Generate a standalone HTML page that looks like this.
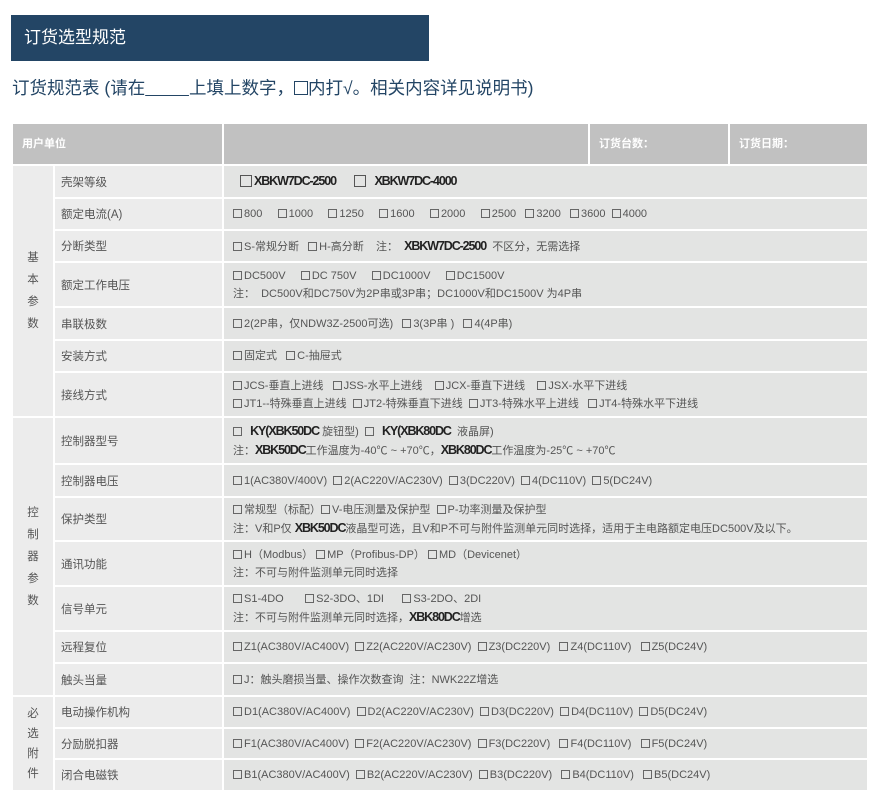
<!DOCTYPE html>
<html><head><meta charset="utf-8"><style>
*{margin:0;padding:0;box-sizing:border-box}
body{width:882px;height:805px;background:#fff;position:relative;overflow:hidden;font-family:"Liberation Sans","Noto Sans CJK SC",sans-serif;color:#555;font-size:11px}
.a{position:absolute}
.l{position:absolute;background:#ececec;left:55px;width:167px;padding-left:6px;display:flex;align-items:center;font-size:11.5px;color:#555}
.c{position:absolute;background:#e3e4e3;left:224px;width:643px;padding-left:9px;display:flex;flex-direction:column;justify-content:center;white-space:pre;line-height:18px}
.b{display:inline-block;width:9px;height:9px;border:1px solid #666;vertical-align:-1px;margin-right:2px}
.B{display:inline-block;width:12px;height:12px;border:1px solid #555;vertical-align:-2px;margin-right:2px}
.k{color:#222;font-weight:bold;letter-spacing:-1.1px;font-size:12.5px}
.v{position:absolute;left:13px;width:40px;text-align:center;line-height:22px;font-size:11.5px;color:#555;background:#ececec;display:flex;flex-direction:column;justify-content:center}
</style></head><body>
<div class="a" style="left:11px;top:15px;width:418px;height:46px;background:#234565;color:#fff;font-size:17px;line-height:46px;padding-left:13px">订货选型规范</div>
<div class="a" style="left:12px;top:75px;font-size:17.5px;color:#234565;white-space:pre">订货规范表 (请在<span style="text-decoration:underline">         </span>上填上数字，<span style="display:inline-block;width:14px;height:14px;border:1px solid #234565;vertical-align:-1px"></span>内打√。相关内容详见说明书)</div>

<div class="a" style="left:13px;top:124px;width:209px;height:40px;background:#c1c1c1;color:#fff;font-size:11px;line-height:40px;padding-left:9px;font-weight:bold">用户单位</div>
<div class="a" style="left:224px;top:124px;width:364px;height:40px;background:#c1c1c1"></div>
<div class="a" style="left:590px;top:124px;width:138px;height:40px;background:#c1c1c1;color:#fff;line-height:40px;padding-left:9px;font-weight:bold">订货台数：</div>
<div class="a" style="left:730px;top:124px;width:137px;height:40px;background:#c1c1c1;color:#fff;line-height:40px;padding-left:9px;font-weight:bold">订货日期：</div>

<div class="v" style="top:166px;height:250px">基<br>本<br>参<br>数</div>
<div class="v" style="top:418px;height:277px">控<br>制<br>器<br>参<br>数</div>
<div class="v" style="top:697px;height:93px;line-height:20px">必<br>选<br>附<br>件</div>

<div class="l" style="top:166px;height:31px">壳架等级</div>
<div class="c" style="top:166px;height:31px;padding-left:16px"><div><span class="B"></span><span class="k">XBKW7DC-2500</span>      <span class="B"></span>  <span class="k">XBKW7DC-4000</span></div></div>
<div class="l" style="top:199px;height:30px">额定电流(A)</div>
<div class="c" style="top:199px;height:30px"><div><span class="b"></span>800     <span class="b"></span>1000     <span class="b"></span>1250     <span class="b"></span>1600     <span class="b"></span>2000     <span class="b"></span>2500   <span class="b"></span>3200   <span class="b"></span>3600  <span class="b"></span>4000</div></div>
<div class="l" style="top:231px;height:30px">分断类型</div>
<div class="c" style="top:231px;height:30px"><div><span class="b"></span>S-常规分断   <span class="b"></span>H-高分断    注：  <span class="k">XBKW7DC-2500</span>  不区分，无需选择</div></div>
<div class="l" style="top:263px;height:43px">额定工作电压</div>
<div class="c" style="top:263px;height:43px"><div><span class="b"></span>DC500V     <span class="b"></span>DC 750V     <span class="b"></span>DC1000V     <span class="b"></span>DC1500V</div><div>注：  DC500V和DC750V为2P串或3P串；DC1000V和DC1500V 为4P串</div></div>
<div class="l" style="top:308px;height:31px">串联极数</div>
<div class="c" style="top:308px;height:31px"><div><span class="b"></span>2(2P串，仅NDW3Z-2500可选)   <span class="b"></span>3(3P串 )   <span class="b"></span>4(4P串)</div></div>
<div class="l" style="top:341px;height:30px">安装方式</div>
<div class="c" style="top:341px;height:30px"><div><span class="b"></span>固定式   <span class="b"></span>C-抽屉式</div></div>
<div class="l" style="top:373px;height:43px">接线方式</div>
<div class="c" style="top:373px;height:43px"><div><span class="b"></span>JCS-垂直上进线   <span class="b"></span>JSS-水平上进线    <span class="b"></span>JCX-垂直下进线    <span class="b"></span>JSX-水平下进线</div><div><span class="b"></span>JT1--特殊垂直上进线  <span class="b"></span>JT2-特殊垂直下进线  <span class="b"></span>JT3-特殊水平上进线   <span class="b"></span>JT4-特殊水平下进线</div></div>

<div class="l" style="top:418px;height:45px">控制器型号</div>
<div class="c" style="top:418px;height:45px"><div><span class="b"></span>  <span class="k">KY(XBK50DC</span> 旋钮型)  <span class="b"></span>  <span class="k">KY(XBK80DC</span>  液晶屏)</div><div>注：<span class="k">XBK50DC</span>工作温度为-40℃ ~ +70℃，<span class="k">XBK80DC</span>工作温度为-25℃ ~ +70℃</div></div>
<div class="l" style="top:465px;height:31px">控制器电压</div>
<div class="c" style="top:465px;height:31px"><div><span class="b"></span>1(AC380V/400V)  <span class="b"></span>2(AC220V/AC230V)  <span class="b"></span>3(DC220V)  <span class="b"></span>4(DC110V)  <span class="b"></span>5(DC24V)</div></div>
<div class="l" style="top:498px;height:42px">保护类型</div>
<div class="c" style="top:498px;height:42px"><div><span class="b"></span>常规型（标配）<span class="b"></span>V-电压测量及保护型  <span class="b"></span>P-功率测量及保护型</div><div>注：V和P仅 <span class="k">XBK50DC</span>液晶型可选，且V和P不可与附件监测单元同时选择，适用于主电路额定电压DC500V及以下。</div></div>
<div class="l" style="top:542px;height:43px">通讯功能</div>
<div class="c" style="top:542px;height:43px"><div><span class="b"></span>H（Modbus） <span class="b"></span>MP（Profibus-DP） <span class="b"></span>MD（Devicenet）</div><div>注：不可与附件监测单元同时选择</div></div>
<div class="l" style="top:587px;height:43px">信号单元</div>
<div class="c" style="top:587px;height:43px"><div><span class="b"></span>S1-4DO       <span class="b"></span>S2-3DO、1DI      <span class="b"></span>S3-2DO、2DI</div><div>注：不可与附件监测单元同时选择，<span class="k">XBK80DC</span>增选</div></div>
<div class="l" style="top:632px;height:30px">远程复位</div>
<div class="c" style="top:632px;height:30px"><div><span class="b"></span>Z1(AC380V/AC400V)  <span class="b"></span>Z2(AC220V/AC230V)  <span class="b"></span>Z3(DC220V)   <span class="b"></span>Z4(DC110V)   <span class="b"></span>Z5(DC24V)</div></div>
<div class="l" style="top:664px;height:31px">触头当量</div>
<div class="c" style="top:664px;height:31px"><div><span class="b"></span>J：触头磨损当量、操作次数查询  注：NWK22Z增选</div></div>
<div class="l" style="top:697px;height:30px">电动操作机构</div>
<div class="c" style="top:697px;height:30px"><div><span class="b"></span>D1(AC380V/AC400V)  <span class="b"></span>D2(AC220V/AC230V)  <span class="b"></span>D3(DC220V)  <span class="b"></span>D4(DC110V)  <span class="b"></span>D5(DC24V)</div></div>
<div class="l" style="top:729px;height:29px">分励脱扣器</div>
<div class="c" style="top:729px;height:29px"><div><span class="b"></span>F1(AC380V/AC400V)  <span class="b"></span>F2(AC220V/AC230V)  <span class="b"></span>F3(DC220V)   <span class="b"></span>F4(DC110V)   <span class="b"></span>F5(DC24V)</div></div>
<div class="l" style="top:760px;height:30px">闭合电磁铁</div>
<div class="c" style="top:760px;height:30px"><div><span class="b"></span>B1(AC380V/AC400V)  <span class="b"></span>B2(AC220V/AC230V)  <span class="b"></span>B3(DC220V)   <span class="b"></span>B4(DC110V)   <span class="b"></span>B5(DC24V)</div></div>
</body></html>
